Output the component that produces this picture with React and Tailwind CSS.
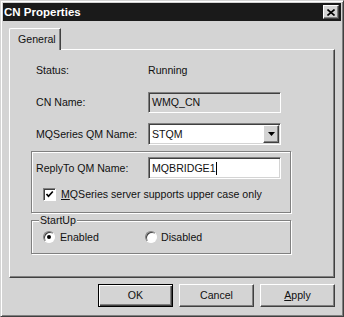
import React from 'react';

const sunken =
  'border border-t-[#808080] border-l-[#808080] border-b-white border-r-white shadow-[inset_1px_1px_0_#404040,inset_-1px_-1px_0_#d4d4d4]';
const raised =
  'border border-t-white border-l-white border-b-[#404040] border-r-[#404040] shadow-[inset_-1px_-1px_0_#808080]';
const etched = 'border border-[#808080] shadow-[inset_1px_1px_0_#fff,1px_1px_0_#fff]';

function Button({ children, isDefault }) {
  return (
    <button
      className={
        isDefault
          ? 'w-[75px] h-[23px] bg-[#d4d4d4] border border-black shadow-[inset_1px_1px_0_#fff,inset_-1px_-1px_0_#404040,inset_-2px_-2px_0_#808080] flex items-center justify-center'
          : 'w-[75px] h-[23px] bg-[#d4d4d4] ' + raised + ' flex items-center justify-center'
      }
    >
      {children}
    </button>
  );
}

function Radio({ checked }) {
  return (
    <span className="w-[12px] h-[12px] rounded-full bg-white border border-t-[#808080] border-l-[#808080] border-b-white border-r-white shadow-[inset_1px_1px_0_#404040] flex items-center justify-center">
      {checked && <span className="w-[4px] h-[4px] rounded-full bg-black" />}
    </span>
  );
}

export default function App() {
  return (
    <div className="w-[344px] h-[317px] bg-[#d4d4d4] border border-t-[#d4d4d4] border-l-[#d4d4d4] border-b-[#404040] border-r-[#404040] shadow-[inset_1px_1px_0_#fff,inset_-1px_-1px_0_#808080] p-[2px] flex flex-col font-['Liberation_Sans',Arial,sans-serif] text-[10.6px] text-[#111] leading-[13px]">
      {/* Title bar */}
      <div className="h-[18px] bg-[#1a1a1a] flex items-center justify-between pl-[1px] pr-[2px]">
        <span className="text-white font-bold text-[11.5px]">CN Properties</span>
        <button className={'w-[16px] h-[14px] bg-[#d4d4d4] flex items-center justify-center ' + raised}>
          <svg width="8" height="7" viewBox="0 0 8 7">
            <path d="M0.5 0.5 L7.5 6.5 M7.5 0.5 L0.5 6.5" stroke="black" strokeWidth="1.6" />
          </svg>
        </button>
      </div>

      <div className="px-[6px] pt-[7px] flex flex-col">
        {/* Tab */}
        <div className="relative z-10 -mb-px w-[52px] h-[22px] bg-[#d4d4d4] border-l border-t border-r border-l-white border-t-white border-r-[#404040] shadow-[inset_-1px_0_0_#808080] rounded-tl-[2px] pl-[8px] pt-[4px]">
          General
        </div>

        {/* Panel */}
        <div className="h-[229px] border border-t-white border-l-white border-b-[#404040] border-r-[#404040] shadow-[inset_-1px_-1px_0_#808080] pt-[9px] flex flex-col">
          <div className="pl-[26px] h-[22px] flex items-center">
            <span className="w-[112px]">Status:</span>
            <span>Running</span>
          </div>

          <div className="pl-[26px] mt-[11px] h-[21px] flex items-center">
            <span className="w-[112px]">CN Name:</span>
            <div className={'w-[133px] h-[21px] bg-[#d4d4d4] pl-[3px] flex items-center ' + sunken}>WMQ_CN</div>
          </div>

          <div className="pl-[26px] mt-[10px] h-[22px] flex items-center">
            <span className="w-[112px]">MQSeries QM Name:</span>
            <div className={'w-[133px] h-[22px] bg-white pl-[3px] pr-[1px] flex items-center justify-between ' + sunken}>
              <span>STQM</span>
              <span className={'w-[16px] h-[18px] bg-[#d4d4d4] flex items-center justify-center ' + raised}>
                <svg width="7" height="4" viewBox="0 0 7 4">
                  <path d="M0 0 H7 L3.5 4 Z" fill="black" />
                </svg>
              </span>
            </div>
          </div>

          {/* ReplyTo group */}
          <div className={'ml-[21px] mt-[6px] w-[260px] h-[62px] pl-[4px] pt-[5px] flex flex-col ' + etched}>
            <div className="h-[22px] flex items-center">
              <span className="w-[112px]">ReplyTo QM Name:</span>
              <div className={'w-[133px] h-[22px] bg-white pl-[3px] flex items-center ' + sunken}>
                <span>MQBRIDGE1</span>
                <span className="w-px h-[13px] bg-black" />
              </div>
            </div>
            <div className="mt-[9px] ml-[7px] flex items-center">
              <span className="w-[13px] h-[13px] bg-white border border-t-[#808080] border-l-[#808080] border-b-white border-r-white shadow-[inset_1px_1px_0_#404040] flex items-center justify-center">
                <svg width="9" height="9" viewBox="0 0 9 9">
                  <path d="M1.5 4 L3.5 6.3 L7.8 1.5" stroke="black" strokeWidth="1.7" fill="none" />
                </svg>
              </span>
              <span className="ml-[5px]">
                <span className="underline">M</span>QSeries server supports upper case only
              </span>
            </div>
          </div>

          {/* StartUp group */}
          <div className={'relative ml-[21px] mt-[7px] w-[260px] h-[34px] pl-[11px] flex items-center ' + etched}>
            <span className="absolute left-[7px] -top-[7px] px-[1px] bg-[#d4d4d4]">StartUp</span>
            <div className="w-[102px] flex items-center">
              <Radio checked />
              <span className="ml-[5px]">Enabled</span>
            </div>
            <div className="flex items-center">
              <Radio />
              <span className="ml-[4px]">Disabled</span>
            </div>
          </div>
        </div>

        {/* Buttons */}
        <div className="mt-[6px] flex justify-end gap-[6px]">
          <Button isDefault>OK</Button>
          <Button>Cancel</Button>
          <Button>
            <span>
              <span className="underline">A</span>pply
            </span>
          </Button>
        </div>
      </div>
    </div>
  );
}
